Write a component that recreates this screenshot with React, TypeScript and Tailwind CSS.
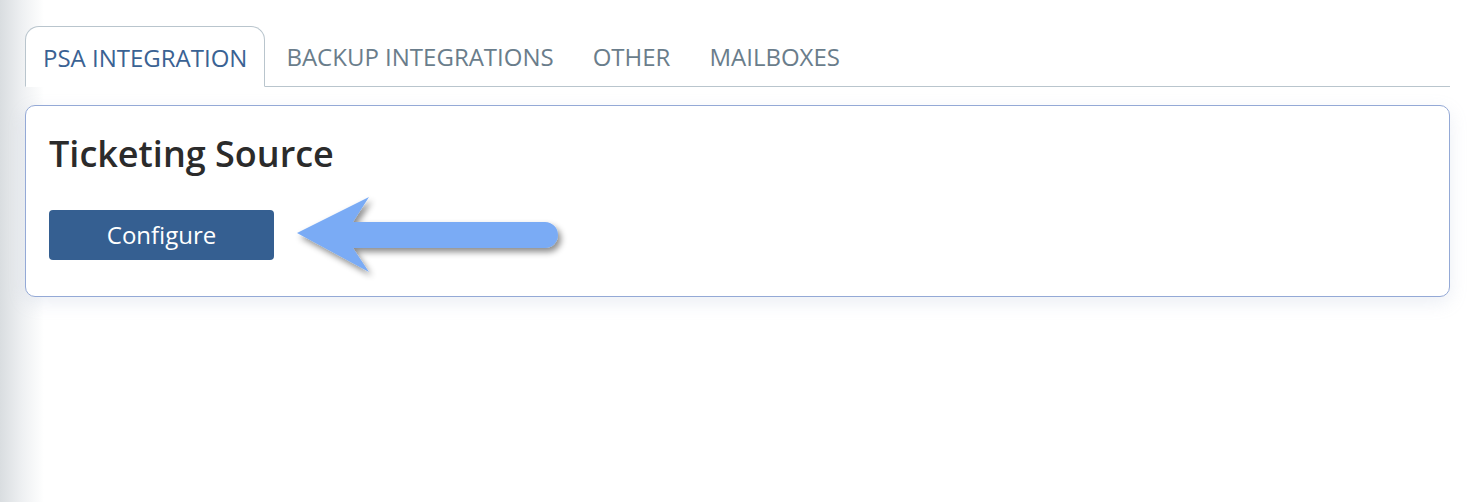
const tabs = ["PSA INTEGRATION", "BACKUP INTEGRATIONS", "OTHER", "MAILBOXES"];

function Arrow() {
  return (
    <svg width="290" height="100" viewBox="0 0 290 100" className="absolute left-[290px] top-[190px]">
      <defs>
        <filter id="sh" x="-20%" y="-40%" width="140%" height="180%">
          <feDropShadow dx="3" dy="4" stdDeviation="3" floodColor="#000" floodOpacity="0.45" />
        </filter>
      </defs>
      <path
        d="M7 43 L79 7 L63 32 L255 32 A13 13 0 0 1 255 58 L63 58 L79 82 Z"
        fill="#7aabf5"
        filter="url(#sh)"
      />
    </svg>
  );
}

export default function App() {
  return (
    <div className="relative w-[1476px] h-[502px] bg-white font-['Open_Sans',sans-serif] overflow-hidden">
      {/* sidebar shadow on the left */}
      <div className="absolute left-0 top-0 h-full w-[44px] bg-gradient-to-r from-[#d9dde0] via-[#eef0f2] to-transparent" />

      <div className="relative pl-[25px] pr-[26px] pt-[26px]">
        <div className="flex items-end border-b border-[#b9c5cd]">
          {tabs.map((t, i) =>
            i === 0 ? (
              <div
                key={t}
                className="-mb-px h-[61px] flex items-center px-[17px] pt-[2px] border border-b-white border-[#b9c5cd] rounded-t-[14px] bg-white text-[24px] text-[#3a6293]"
              >
                {t}
              </div>
            ) : (
              <div key={t} className="h-[60px] flex items-center pl-[21px] pr-[18px] pt-[2px] text-[24px] text-[#6a7d8b]">
                {t}
              </div>
            )
          )}
        </div>

        <div className="mt-[18px] h-[192px] rounded-[10px] border border-[#94a9d6] bg-white px-[23px] pt-[24px] shadow-[0_6px_18px_rgba(150,165,200,0.18)]">
          <h2 className="text-[36px] font-semibold leading-[48px] text-[#2b2b2b]">Ticketing Source</h2>
          <button className="mt-[32px] w-[225px] h-[50px] rounded-[4px] bg-[#355f91] text-white text-[24px]">
            Configure
          </button>
        </div>
      </div>

      <Arrow />
    </div>
  );
}
